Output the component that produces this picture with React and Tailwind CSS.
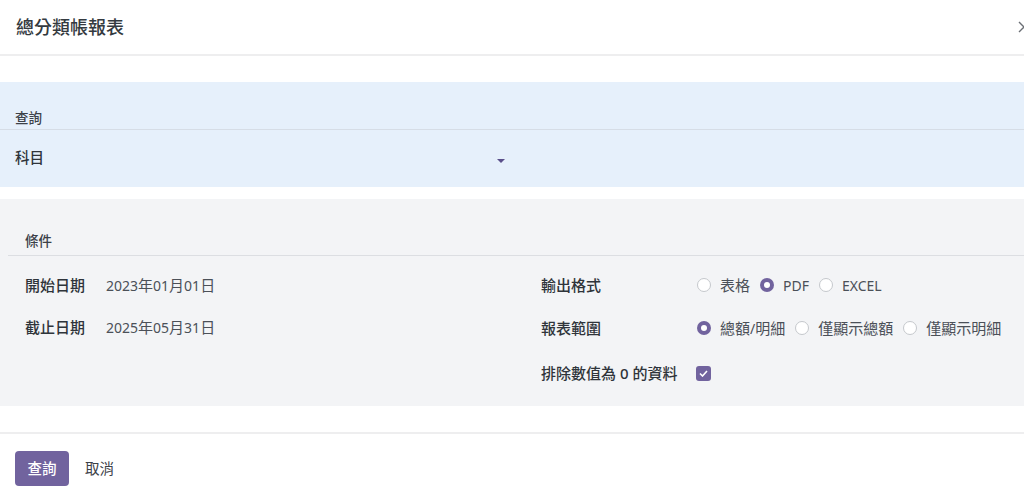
import React from "react";

const font = { fontFamily: '"Noto Sans", "Noto Sans CJK TC", sans-serif' };

function Mixed({ text }) {
  const parts = text.split(/([\u3000-\u9fff]+)/).filter(Boolean);
  return (
    <span className="text-[14px] text-[#4b5058] whitespace-nowrap">
      {parts.map((p, i) =>
        /[\u3000-\u9fff]/.test(p) ? (
          <span key={i} className="text-[15px]">{p}</span>
        ) : (
          <span key={i}>{p}</span>
        )
      )}
    </span>
  );
}

function Radio({ checked, label }) {
  return (
    <div className="flex items-center gap-[9px] mr-[10px]">
      {checked ? (
        <span className="w-[14px] h-[14px] rounded-full bg-[#71639e] flex items-center justify-center">
          <span className="w-[6px] h-[6px] rounded-full bg-white" />
        </span>
      ) : (
        <span className="w-[14px] h-[14px] rounded-full border border-[#c5c8cc] bg-white" />
      )}
      <Mixed text={label} />
    </div>
  );
}

export default function App() {
  return (
    <div className="w-[1024px] h-[498px] bg-white overflow-hidden text-[#374151]" style={font}>
      <div className="h-[56px] flex items-center justify-between pl-4 border-b-2 border-[#eeeeef]">
        <div className="text-[18px] font-medium text-[#343a40]">總分類帳報表</div>
        <svg width="12" height="14" viewBox="0 0 12 14" className="-mr-[6px]">
          <path d="M1 2 L11 12 M11 2 L1 12" stroke="#6b6f75" strokeWidth="1.4" />
        </svg>
      </div>
      <div className="h-[26px]" />
      <div className="bg-[#e6f0fb] h-[105px] pt-[26px]">
        <div className="border-b border-[#d6dde6] pl-[15px] pb-[3px] text-[13.5px] font-medium text-[#3c4148] h-[22px]">查詢</div>
        <div className="flex items-center h-[56px] pl-[15px] w-[505px] justify-between">
          <span className="text-[14.5px] font-medium text-[#2f343a]">科目</span>
          <svg width="8" height="5" viewBox="0 0 8 5" className="mt-[6px]">
            <path d="M0 0 L8 0 L4 4 Z" fill="#5a4f8a" />
          </svg>
        </div>
      </div>
      <div className="h-[12px]" />
      <div className="bg-[#f3f4f6] h-[207px] pt-[32px] pl-2">
        <div className="border-b border-[#dcdee2] pl-[17px] pb-[4px] text-[13.5px] font-medium text-[#3c4148] h-[25px]">條件</div>
        <div className="flex pl-[17px] pt-[9px]">
          <div className="w-[516px] flex flex-col">
            <div className="flex items-center h-[40px]">
              <span className="w-[81px] text-[15px] font-medium text-[#2f343a]">開始日期</span>
              <Mixed text="2023年01月01日" />
            </div>
            <div className="flex items-center h-[44px]">
              <span className="w-[81px] text-[15px] font-medium text-[#2f343a]">截止日期</span>
              <Mixed text="2025年05月31日" />
            </div>
          </div>
          <div className="flex flex-col">
            <div className="flex items-center h-[40px]">
              <span className="w-[156px] text-[15px] font-medium text-[#2f343a]">輸出格式</span>
              <Radio label="表格" />
              <Radio checked label="PDF" />
              <Radio label="EXCEL" />
            </div>
            <div className="flex items-center h-[46px]">
              <span className="w-[156px] text-[15px] font-medium text-[#2f343a]">報表範圍</span>
              <Radio checked label="總額/明細" />
              <Radio label="僅顯示總額" />
              <Radio label="僅顯示明細" />
            </div>
            <div className="flex items-center h-[44px]">
              <span className="w-[155px] text-[15px] font-medium text-[#2f343a] whitespace-nowrap">排除數值為 0 的資料</span>
              <span className="w-[15px] h-[15px] rounded-[3px] bg-[#71639e] flex items-center justify-center">
                <svg width="9" height="7" viewBox="0 0 9 7">
                  <path d="M1 3.5 L3.5 6 L8 1" stroke="white" strokeWidth="1.6" fill="none" />
                </svg>
              </span>
            </div>
          </div>
        </div>
      </div>
      <div className="h-[26px]" />
      <div className="border-t-2 border-[#eeeeef] pl-[15px] pt-[17px] flex items-center gap-4">
        <button className="h-[35px] w-[54px] rounded-[4px] bg-[#71639e] text-white text-[14.5px] font-medium">查詢</button>
        <button className="text-[14.5px] text-[#3c4148]">取消</button>
      </div>
    </div>
  );
}
